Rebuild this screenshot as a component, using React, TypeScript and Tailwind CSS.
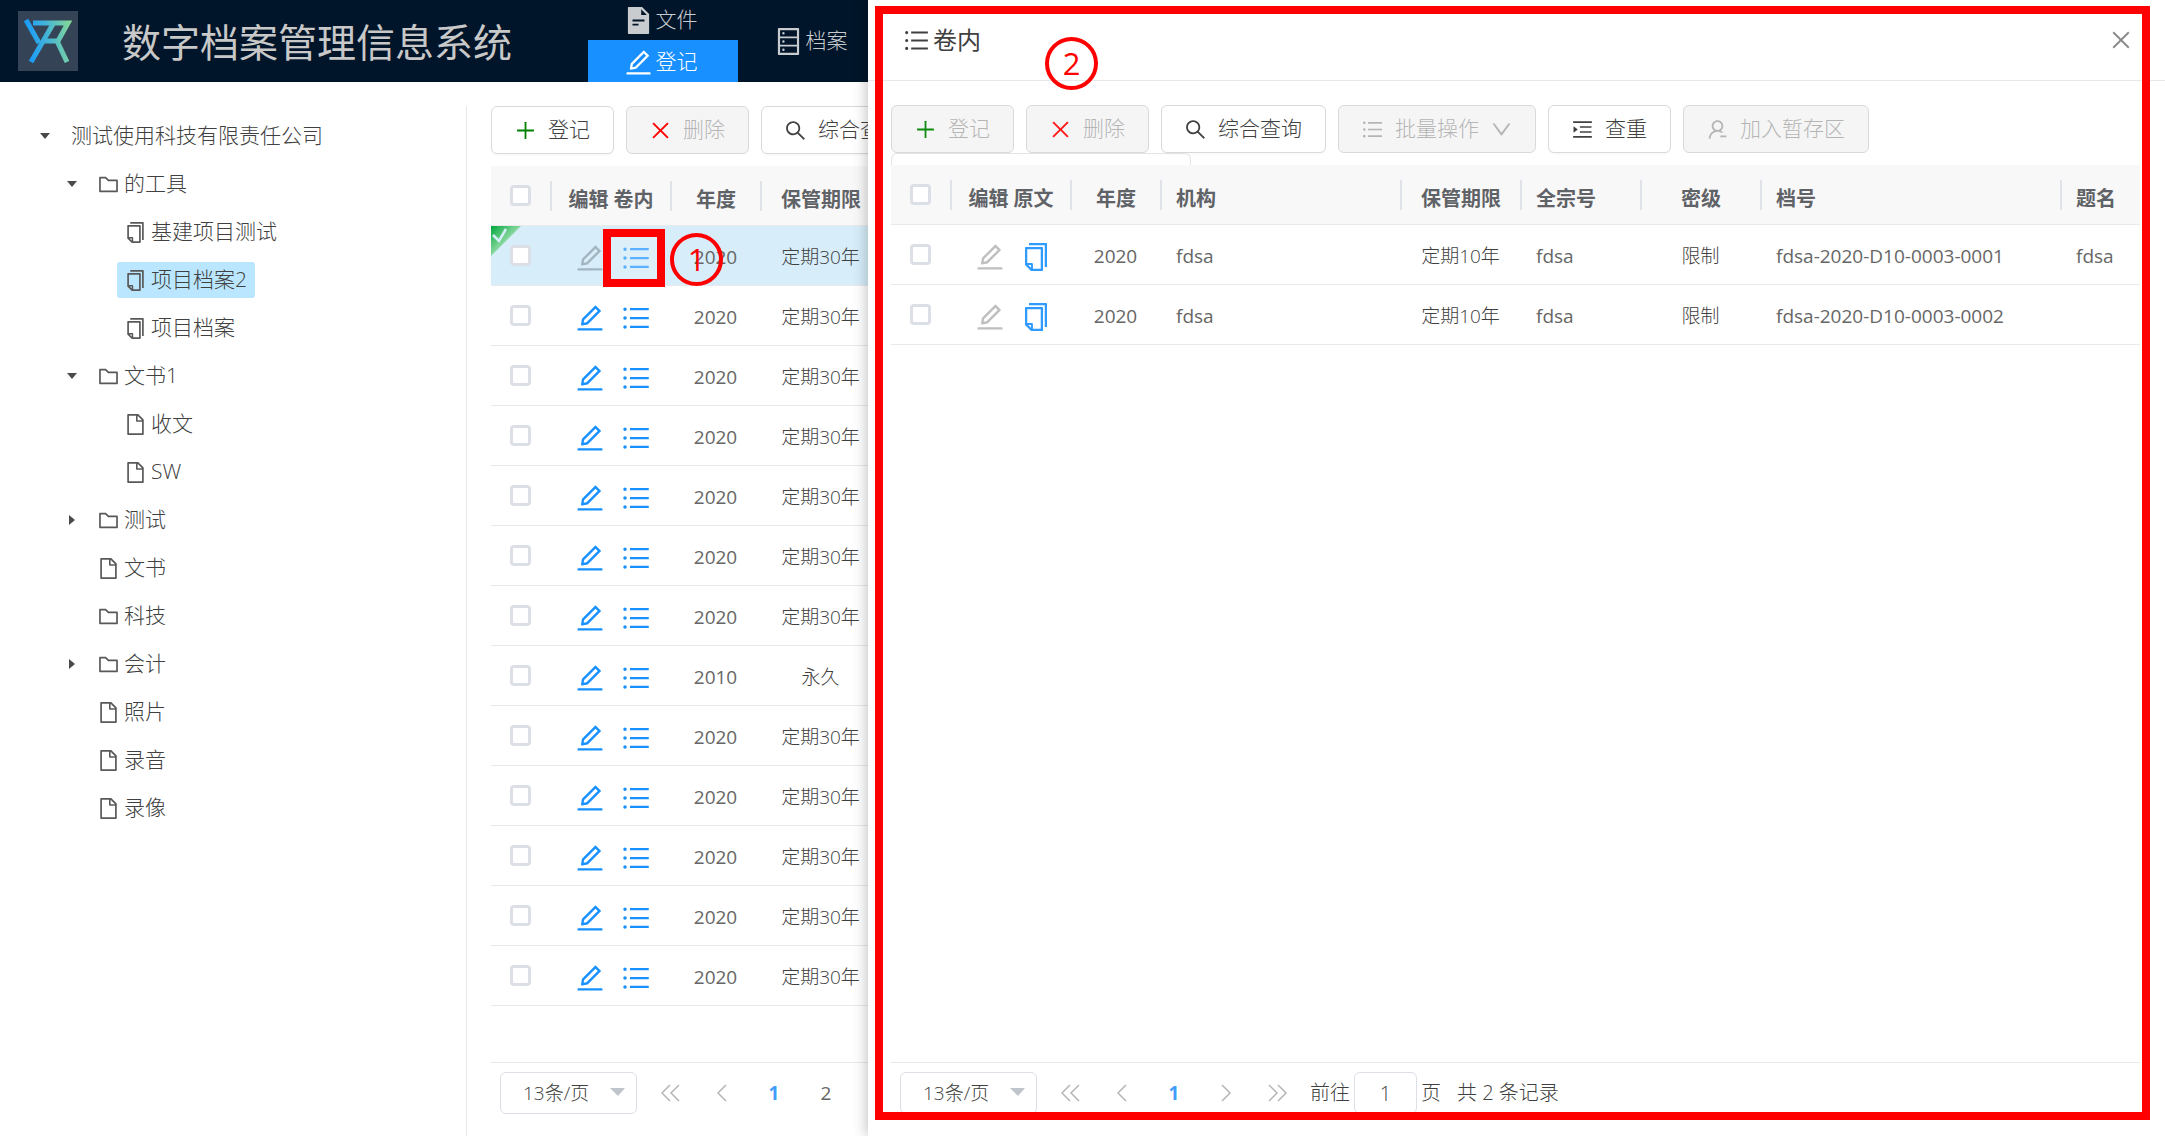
import React from 'react';
import {
    AiFillFileText,
    AiOutlineClose,
    AiOutlineCopy,
    AiOutlineDatabase,
    AiOutlineDown,
    AiOutlineEdit,
    AiOutlineFile,
    AiOutlineFolder,
    AiOutlineMenuUnfold,
    AiOutlinePlus,
    AiOutlineSearch,
    AiOutlineUnorderedList,
    AiOutlineUserDelete,
} from 'react-icons/ai';
import type { IconType } from 'react-icons';

interface IconProps {
    as: IconType;
    size?: number;
    className?: string;
}

// Ant icons are drawn inside a 896 unit box, crop the spare margin away
function Icon({ as: Glyph, size = 21, className = '' }: IconProps) {
    return <Glyph viewBox="64 64 896 896" size={size} className={`shrink-0 ${className}`} aria-hidden="true" />;
}

function Logo() {
    return (
        <svg viewBox="0 0 60 60" className="size-[60px] shrink-0 bg-[#344456]" role="img" aria-label="logo">
            <defs>
                <linearGradient id="logo" gradientUnits="userSpaceOnUse" x1="6" y1="30" x2="54" y2="24">
                    <stop offset="0.1" stopColor="#1c9cf6" />
                    <stop offset="0.5" stopColor="#45b5d6" />
                    <stop offset="1" stopColor="#84d896" />
                </linearGradient>
            </defs>
            <g fill="none" stroke="url(#logo)" strokeWidth="5">
                <path d="M8 9L21 32" />
                <path d="M15 12h35L40 30H26" />
                <path d="M35 13L13 51" />
                <path d="M39 30l10 21" />
            </g>
        </svg>
    );
}

function Header() {
    return (
        <header className="flex h-[82px] shrink-0 items-center bg-[#001529] pl-[18px] text-[21px] text-[#c9cccf]">
            <Logo />
            <h1 className="ml-[44px] pt-0.5 text-[39px] leading-[60px] font-normal whitespace-nowrap text-[#c8c8c8]">
                数字档案管理信息系统
            </h1>
            <nav className="ml-[76px] flex h-full">
                <div className="flex w-[150px] flex-col">
                    <a href="#files" className="flex h-[40px] items-center justify-center gap-1 pr-1">
                        <Icon as={AiFillFileText} size={27} />
                        文件
                    </a>
                    <a
                        href="#register"
                        className="flex h-[42px] items-center justify-center gap-1 bg-[#1890ff] pt-0.5 pr-1 text-white"
                    >
                        <Icon as={AiOutlineEdit} size={27} />
                        登记
                    </a>
                </div>
                <a href="#archives" className="flex w-[150px] items-center justify-center gap-1 pr-1">
                    <Icon as={AiOutlineDatabase} size={27} />
                    档案
                </a>
            </nav>
        </header>
    );
}

interface TreeNode {
    label: string;
    level: 0 | 1 | 2;
    icon?: IconType;
    open?: boolean;
    selected?: boolean;
}

const tree: TreeNode[] = [
    { label: '测试使用科技有限责任公司', level: 0, open: true },
    { label: '的工具', level: 1, icon: AiOutlineFolder, open: true },
    { label: '基建项目测试', level: 2, icon: AiOutlineCopy },
    { label: '项目档案2', level: 2, icon: AiOutlineCopy, selected: true },
    { label: '项目档案', level: 2, icon: AiOutlineCopy },
    { label: '文书1', level: 1, icon: AiOutlineFolder, open: true },
    { label: '收文', level: 2, icon: AiOutlineFile },
    { label: 'SW', level: 2, icon: AiOutlineFile },
    { label: '测试', level: 1, icon: AiOutlineFolder, open: false },
    { label: '文书', level: 1, icon: AiOutlineFile },
    { label: '科技', level: 1, icon: AiOutlineFolder },
    { label: '会计', level: 1, icon: AiOutlineFolder, open: false },
    { label: '照片', level: 1, icon: AiOutlineFile },
    { label: '录音', level: 1, icon: AiOutlineFile },
    { label: '录像', level: 1, icon: AiOutlineFile },
];

const indents = ['pl-[27px]', 'pl-[54px]', 'pl-[81px]'];

function Tree() {
    return (
        <ul className="pt-1.5 text-[21px]">
            {tree.map((node) => (
                <li key={node.label} className={`flex h-12 items-center ${indents[node.level]}`}>
                    <span className="flex w-9 justify-center">
                        {node.open !== undefined && (
                            <svg width="12" height="12" viewBox="0 0 12 12" fill="#4a4a4a">
                                <path d={node.open ? 'M1 3h10L6 9z' : 'M3 1v10l6-5z'} />
                            </svg>
                        )}
                    </span>
                    <button
                        type="button"
                        className={`flex h-9 items-center gap-[5px] rounded-[3px] px-2 ${node.selected ? 'bg-[#bae7ff]' : ''}`}
                    >
                        {node.icon && <Icon as={node.icon} className="text-[#595959]" />}
                        {node.label}
                    </button>
                </li>
            ))}
        </ul>
    );
}

interface ToolButtonProps {
    icon: IconType;
    label: string;
    tint?: string;
    disabled?: boolean;
    dropdown?: boolean;
}

function ToolButton({ icon, label, tint, disabled, dropdown }: ToolButtonProps) {
    return (
        <button
            type="button"
            disabled={disabled}
            className={`flex h-12 shrink-0 items-center gap-3 rounded-md border border-[#d9d9d9] px-[23px] whitespace-nowrap ${
                disabled ? 'bg-[#f5f5f5] text-[#b5b5b5]' : 'bg-white shadow-[0_2px_0_rgba(0,0,0,0.02)]'
            }`}
        >
            <Icon as={icon} className={tint} />
            {label}
            {dropdown && <Icon as={AiOutlineDown} />}
        </button>
    );
}

function Check({ label }: { label: string }) {
    return (
        <input
            type="checkbox"
            aria-label={label}
            className="block size-[21px] appearance-none rounded-[4px] border-3 border-[#dcdfe6] bg-white"
        />
    );
}

interface CellProps {
    children?: React.ReactNode;
    left?: boolean;
    last?: boolean;
}

function Th({ children, left, last }: CellProps) {
    return (
        <th className="h-[60px] border-b border-[#e8eaec] bg-[#f8f8f8] p-0 font-bold text-[#5f6266]">
            <div
                className={`flex h-[30px] items-center whitespace-nowrap ${left ? 'pl-[14px]' : 'justify-center'} ${
                    last ? '' : 'border-r-2 border-[#dfe2e8]'
                }`}
            >
                {typeof children === 'string' ? <span className="pt-2">{children}</span> : children}
            </div>
        </th>
    );
}

function Td({ children, left }: CellProps) {
    return (
        <td
            className={`h-[60px] border-b border-[#e8eaec] pt-[3px] pb-0 whitespace-nowrap ${
                left ? 'pr-0 pl-[14px]' : 'pr-[3px] pl-0 text-center'
            }`}
        >
            {children}
        </td>
    );
}

// Plain latin values are too thin in the light weight
function Value({ children }: { children: React.ReactNode }) {
    return <span className="font-normal text-[#666666]">{children}</span>;
}

function Chevron({ double, flip }: { double?: boolean; flip?: boolean }) {
    return (
        <svg
            width="20"
            height="18"
            viewBox="0 0 20 18"
            fill="none"
            stroke="#b5b5b5"
            strokeWidth="1.5"
            className={flip ? 'rotate-180' : ''}
        >
            {double ? <path d="M10 1L2 9l8 8M19 1l-8 8 8 8" /> : <path d="M14 1L6 9l8 8" />}
        </svg>
    );
}

interface PagerProps {
    pages: number[];
    total?: number;
}

function Pager({ pages, total }: PagerProps) {
    const cell = 'flex h-[42px] w-[52px] shrink-0 items-center justify-center';
    return (
        <div className="flex shrink-0 items-start border-t border-[#e8eaec] pt-[9px] pb-[22px] pl-[9px] text-[19px]">
            <div className="relative mr-[7px] w-[137px] shrink-0">
                <select
                    aria-label="每页条数"
                    className="h-[42px] w-full appearance-none rounded-md border border-[#dcdfe6] bg-white pl-[22px]"
                >
                    <option>13条/页</option>
                </select>
                <svg width="15" height="8" viewBox="0 0 15 8" className="pointer-events-none absolute top-4 right-3">
                    <path d="M0 0h15L8 8z" fill="#c0c4cc" />
                </svg>
            </div>
            <button type="button" aria-label="首页" className={cell}>
                <Chevron double />
            </button>
            <button type="button" aria-label="上一页" className={cell}>
                <Chevron />
            </button>
            {pages.map((page) => (
                <button
                    key={page}
                    type="button"
                    className={`${cell} ${page === 1 ? 'font-bold text-[#409eff]' : 'font-normal text-[#666666]'}`}
                >
                    {page}
                </button>
            ))}
            {total !== undefined && (
                <>
                    <button type="button" aria-label="下一页" className={cell}>
                        <Chevron flip />
                    </button>
                    <button type="button" aria-label="末页" className={cell}>
                        <Chevron double flip />
                    </button>
                    <label className="ml-1.5 flex h-[42px] items-center gap-1 text-[20px] whitespace-nowrap">
                        前往
                        <input
                            defaultValue="1"
                            className="h-[42px] w-[63px] rounded-md border border-[#dcdfe6] bg-white text-center"
                        />
                        页
                    </label>
                    <span className="ml-4 text-[20px] leading-[42px] whitespace-nowrap">共 {total} 条记录</span>
                </>
            )}
        </div>
    );
}

const records = Array.from({ length: 13 }, (_, i) =>
    i === 7 ? { year: '2010', period: '永久' } : { year: '2020', period: '定期30年' },
);

function SelectedCorner() {
    return (
        <svg width="30" height="30" viewBox="0 0 30 30" className="absolute top-0 left-0">
            <defs>
                <linearGradient id="corner" x1="0" y1="0" x2="0.5" y2="0.5">
                    <stop offset="0" stopColor="#00a73c" />
                    <stop offset="1" stopColor="#8bd9a0" />
                </linearGradient>
            </defs>
            <path d="M0 0h30L0 30z" fill="url(#corner)" />
            <path d="M2 9l6 6 7-12" fill="none" stroke="#d7eefa" strokeWidth="2.5" />
        </svg>
    );
}

function RecordTable() {
    return (
        <table className="w-full table-fixed border-separate border-spacing-0">
            <colgroup>
                <col className="w-[61px]" />
                <col className="w-[120px]" />
                <col className="w-[90px]" />
                <col className="w-[120px]" />
                <col />
            </colgroup>
            <thead className="text-[20px]">
                <tr>
                    <Th><Check label="全选" /></Th>
                    <Th>编辑 卷内</Th>
                    <Th>年度</Th>
                    <Th>保管期限</Th>
                    <Th last />
                </tr>
            </thead>
            <tbody className="text-[19px]">
                {records.map((record, i) => (
                    <tr key={i} className={i === 0 ? 'relative bg-[#d7eefa]' : ''}>
                        <Td>
                            {i === 0 && <SelectedCorner />}
                            <div className="relative flex justify-center pb-1">
                                <Check label={`选择第${i + 1}行`} />
                            </div>
                        </Td>
                        <Td>
                            <div className="flex items-center justify-center gap-[18px] pt-0.5 pl-1 text-[#1890ff]">
                                <button type="button" aria-label="编辑" className={i === 0 ? 'text-[#a3b5c0]' : ''}>
                                    <Icon as={AiOutlineEdit} size={28} />
                                </button>
                                <button type="button" aria-label="卷内" className={i === 0 ? 'text-[#3ea4ff]' : ''}>
                                    <Icon as={AiOutlineUnorderedList} size={28} />
                                </button>
                            </div>
                        </Td>
                        <Td><Value>{record.year}</Value></Td>
                        <Td>{record.period}</Td>
                        <Td />
                    </tr>
                ))}
            </tbody>
        </table>
    );
}

const volumeFiles = [
    { code: 'fdsa-2020-D10-0003-0001', title: 'fdsa' },
    { code: 'fdsa-2020-D10-0003-0002', title: '' },
];

function VolumeTable() {
    return (
        <table className="w-full table-fixed border-separate border-spacing-0">
            <colgroup>
                <col className="w-[61px]" />
                <col className="w-[120px]" />
                <col className="w-[90px]" />
                <col className="w-[240px]" />
                <col className="w-[120px]" />
                <col className="w-[120px]" />
                <col className="w-[120px]" />
                <col className="w-[300px]" />
                <col />
            </colgroup>
            <thead className="text-[20px]">
                <tr>
                    <Th><Check label="全选卷内文件" /></Th>
                    <Th>编辑 原文</Th>
                    <Th>年度</Th>
                    <Th left>机构</Th>
                    <Th>保管期限</Th>
                    <Th left>全宗号</Th>
                    <Th>密级</Th>
                    <Th left>档号</Th>
                    <Th left last>题名</Th>
                </tr>
            </thead>
            <tbody className="text-[19px]">
                {volumeFiles.map((file) => (
                    <tr key={file.code}>
                        <Td>
                            <div className="flex justify-center pb-1">
                                <Check label={`选择${file.code}`} />
                            </div>
                        </Td>
                        <Td>
                            <div className="flex items-center justify-center gap-[18px] pt-0.5 pl-1">
                                <button type="button" aria-label="编辑" disabled className="text-[#bfbfbf]">
                                    <Icon as={AiOutlineEdit} size={28} />
                                </button>
                                <button type="button" aria-label="原文" className="text-[#2f9bff]">
                                    <Icon as={AiOutlineCopy} size={28} />
                                </button>
                            </div>
                        </Td>
                        <Td><Value>2020</Value></Td>
                        <Td left><Value>fdsa</Value></Td>
                        <Td>定期10年</Td>
                        <Td left><Value>fdsa</Value></Td>
                        <Td>限制</Td>
                        <Td left><Value>{file.code}</Value></Td>
                        <Td left><Value>{file.title}</Value></Td>
                    </tr>
                ))}
            </tbody>
        </table>
    );
}

function VolumeDrawer() {
    return (
        <section className="absolute inset-y-0 right-0 left-[868px] flex flex-col bg-white shadow-[-3px_0_12px_rgba(0,0,0,0.2)]">
            <div className="flex h-[81px] shrink-0 items-center border-b border-[#e8e8e8] pr-[33px] pl-9 text-[24px] text-[#404040]">
                <Icon as={AiOutlineUnorderedList} size={25} />
                <h2 className="ml-1 flex-1 font-normal">卷内</h2>
                <button type="button" aria-label="关闭" className="text-[#8c8c8c]">
                    <Icon as={AiOutlineClose} size={22} />
                </button>
            </div>
            <div className="flex flex-1 flex-col pt-6 pr-[25px] pl-[23px]">
                <div className="flex gap-3 text-[21px]">
                    <ToolButton icon={AiOutlinePlus} label="登记" tint="text-[#0f8a0f]" disabled />
                    <ToolButton icon={AiOutlineClose} label="删除" tint="text-[#ff1a1a]" disabled />
                    <ToolButton icon={AiOutlineSearch} label="综合查询" />
                    <ToolButton icon={AiOutlineUnorderedList} label="批量操作" disabled dropdown />
                    <ToolButton icon={AiOutlineMenuUnfold} label="查重" />
                    <ToolButton icon={AiOutlineUserDelete} label="加入暂存区" disabled />
                </div>
                {/* top edge of the collapsed search panel */}
                <div className="h-3 w-[300px] rounded-t-md border-x border-t border-[#e4e4e4]" />
                <VolumeTable />
                <div className="flex-1" />
                <Pager pages={[1]} total={2} />
            </div>
        </section>
    );
}

function Step({ children, className }: { children: React.ReactNode; className: string }) {
    return (
        <div
            className={`pointer-events-none absolute flex size-[53px] items-center justify-center rounded-full border-4 border-[#ff0000] text-[31px] font-normal text-[#ff0000] ${className}`}
        >
            {children}
        </div>
    );
}

export default function App() {
    return (
        <div className="relative flex min-h-screen flex-col overflow-hidden bg-white font-['Open_Sans','Noto_Sans_CJK_SC',sans-serif] font-light text-[#404040]">
            <Header />
            <div className="flex flex-1 pt-6">
                <aside className="flex w-[467px] shrink-0 flex-col border-r border-[#e8e8e8]">
                    <Tree />
                </aside>
                <main className="flex min-w-0 flex-1 flex-col pl-6">
                    <div className="mb-3 flex gap-3 text-[21px]">
                        <ToolButton icon={AiOutlinePlus} label="登记" tint="text-[#008000]" />
                        <ToolButton icon={AiOutlineClose} label="删除" tint="text-[#ff0000]" disabled />
                        <ToolButton icon={AiOutlineSearch} label="综合查询" />
                    </div>
                    <RecordTable />
                    <div className="flex-1" />
                    <Pager pages={[1, 2]} />
                </main>
            </div>

            <VolumeDrawer />

            {/* walkthrough marks */}
            <div className="pointer-events-none absolute top-[229px] left-[603px] h-[58px] w-[62px] border-8 border-[#ff0000] bg-white/15" />
            <Step className="top-[233px] left-[670px]">1</Step>
            <div className="pointer-events-none absolute top-[6px] right-[15px] bottom-4 left-[875px] border-8 border-[#ff0000]" />
            <Step className="top-[37px] left-[1045px]">2</Step>
        </div>
    );
}
